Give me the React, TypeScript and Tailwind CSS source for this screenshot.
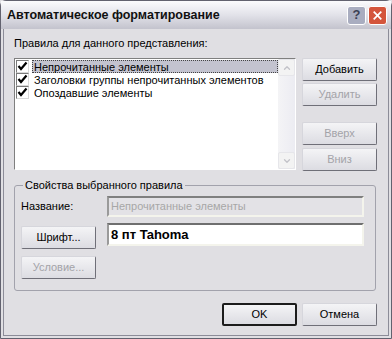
import { ChevronDown, ChevronUp } from "lucide-react";

const font = { fontFamily: '"Liberation Sans", Arial, sans-serif' };

function XpButton({
  label,
  disabled,
  isDefault,
  className = "",
}: {
  label: string;
  disabled?: boolean;
  isDefault?: boolean;
  className?: string;
}) {
  return (
    <div
      className={`flex h-[23px] w-[75px] items-center justify-center rounded-[2px] text-[11px] ${
        isDefault
          ? "border-2 border-[#1c1c1c]"
          : "border border-t-[#d6d6dc] border-l-[#d6d6dc] border-b-[#6f6f78] border-r-[#6f6f78]"
      } bg-gradient-to-b from-[#f4f4f6] to-[#dcdce2] ${disabled ? "text-[#a3a3a8]" : "text-black"} ${className}`}
    >
      {label}
    </div>
  );
}

function CheckBox() {
  return (
    <div className="flex h-[13px] w-[13px] items-center justify-center border border-t-[#7a7a7a] border-l-[#7a7a7a] border-b-[#d8d8d8] border-r-[#d8d8d8] bg-white">
      <svg viewBox="0 0 11 11" className="h-[11px] w-[11px]">
        <path d="M1.5 5 L4 8 L9.5 1.5" fill="none" stroke="#000" strokeWidth="2.2" />
      </svg>
    </div>
  );
}

const rules = [
  "Непрочитанные элементы",
  "Заголовки группы непрочитанных элементов",
  "Опоздавшие элементы",
];

export default function App() {
  return (
    <div style={font} className="h-[339px] w-[392px] overflow-hidden bg-[#e0dfe3]">
      <div className="flex h-full w-full flex-col rounded-t-[6px] border border-[#62626f]">
        <div className="flex h-[28px] shrink-0 items-center justify-between bg-gradient-to-b from-[#fbfbfd] via-[#e2e2e9] to-[#c3c3cd] pl-[6px] pr-[4px]">
          <span className="text-[12.5px] font-bold text-[#111]">Автоматическое форматирование</span>
          <div className="flex gap-[2px]">
            <div className="flex h-[19px] w-[19px] items-center justify-center rounded-[3px] border border-white bg-[#a9adc0] text-[13px] font-bold text-[#3c3f55]">
              ?
            </div>
            <div className="flex h-[19px] w-[19px] items-center justify-center rounded-[3px] border border-white bg-[#d4553c]">
              <svg viewBox="0 0 13 13" className="h-[11px] w-[11px]">
                <path d="M2 2 L11 11 M11 2 L2 11" stroke="#fff" strokeWidth="2" />
              </svg>
            </div>
          </div>
        </div>

        <div className="mx-[2px] mb-[2px] flex flex-1 flex-col border border-t-0 border-[#8c8c98] pl-[10px] pr-[10px] text-[11px] text-black">
          <div className="mt-[8px] h-[13px] leading-[13px]">Правила для данного представления:</div>

          <div className="mt-[8px] flex gap-[6px]">
            <div className="flex h-[112px] w-[282px] border border-t-[#7f7f7f] border-l-[#7f7f7f] border-b-white border-r-white bg-white">
              <div className="flex flex-1 flex-col pl-[1px] pt-[1px]">
                {rules.map((r, i) => (
                  <div key={r} className="flex h-[13px] items-center gap-[3px]">
                    <CheckBox />
                    <span
                      className={`h-[13px] flex-1 whitespace-nowrap pl-[1px] leading-[12px] ${
                        i === 0 ? "border border-dotted border-[#444] bg-[#c3c3cf]" : "border border-transparent"
                      }`}
                    >
                      {r}
                    </span>
                  </div>
                ))}
              </div>
              <div className="flex w-[17px] flex-col justify-between bg-gradient-to-r from-[#f4f4f6] to-[#ececf2]">
                <div className="flex h-[17px] items-center justify-center rounded-[2px] border border-[#e6e6ea] bg-[#f3f3f3]">
                  <ChevronUp className="h-[10px] w-[10px] text-[#c2c2c8]" strokeWidth={3} />
                </div>
                <div className="flex h-[17px] items-center justify-center rounded-[2px] border border-[#e6e6ea] bg-[#f3f3f3]">
                  <ChevronDown className="h-[10px] w-[10px] text-[#c2c2c8]" strokeWidth={3} />
                </div>
              </div>
            </div>
            <div className="flex flex-col">
              <XpButton label="Добавить" />
              <XpButton label="Удалить" disabled className="mt-[2px]" />
              <XpButton label="Вверх" disabled className="mt-[16px]" />
              <XpButton label="Вниз" disabled className="mt-[3px]" />
            </div>
          </div>

          <fieldset className="mt-[8px] h-[112px] w-[362px] rounded-[3px] border border-[#a2a2ac] pl-[6px] pr-[10px]">
            <legend className="ml-[2px] px-[2px] leading-[13px]">Свойства выбранного правила</legend>
            <div className="mt-[4px] flex items-center">
              <span className="w-[86px]">Название:</span>
              <div className="flex h-[21px] w-[257px] items-center border-2 border-t-[#7f7f7f] border-l-[#9a9a9a] border-b-[#f4f4ec] border-r-[#f4f4ec] bg-[#e3e2e6] pl-[2px] text-[#a7a7a7]">
                Непрочитанные элементы
              </div>
            </div>
            <div className="mt-[6px] flex items-start">
              <XpButton label="Шрифт..." className="mt-[3px]" />
              <div className="ml-[11px] flex h-[23px] w-[257px] items-center border-2 border-t-[#6f6f6f] border-l-[#9a9a9a] border-b-[#f4f4ec] border-r-[#f4f4ec] bg-white pl-[2px] text-[13px] font-bold">
                8 пт Tahoma
              </div>
            </div>
            <XpButton label="Условие..." disabled className="mt-[7px]" />
          </fieldset>

          <div className="mt-[12px] flex justify-end gap-[5px] pr-[1px]">
            <XpButton label="OK" isDefault />
            <XpButton label="Отмена" />
          </div>
        </div>
      </div>
    </div>
  );
}
